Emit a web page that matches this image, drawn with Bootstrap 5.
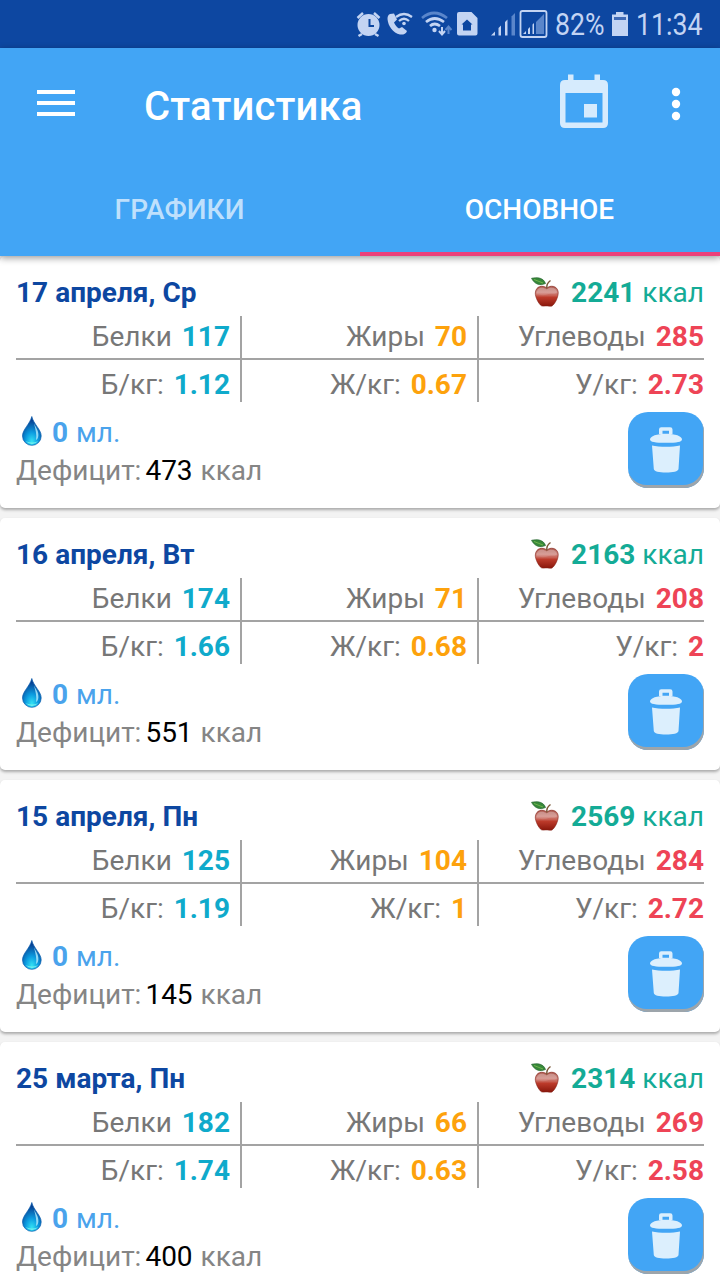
<!DOCTYPE html>
<html lang="ru">
<head>
<meta charset="utf-8">
<meta name="viewport" content="width=device-width, initial-scale=1">
<title>Статистика</title>
<link href="https://cdn.jsdelivr.net/npm/bootstrap@5.3.0/dist/css/bootstrap.min.css" rel="stylesheet">
<style>
body{font-family:Roboto,"Noto Sans",sans-serif;font-size:28px;line-height:33px;color:#777;background:#f3f3f3;height:1280px}
svg{display:block;flex:none}
.status{height:48px;background:#0d47a1;color:#c3d4f3;font-size:31px}
.cond{display:inline-block;transform-origin:0 50%;transform:scaleX(.86);white-space:nowrap;line-height:48px;padding-top:1px}
.topbar{background:#42a5f5;height:208px;position:relative;z-index:2;box-shadow:0 2px 7px rgba(0,0,0,.4)}
.bar-row{height:112px}
.title{font-size:40px;line-height:48px;font-weight:500;color:#fff;margin:5px 0 0 69px;letter-spacing:.15px}
.tabs .nav-link{height:96px;line-height:100px;padding:0 1px 0 0;border-radius:0;font-weight:500;color:#bfe0fc;border-bottom:4px solid transparent}
.tabs .nav-link.active{color:#fff;border-color:#ec407a}
.day{height:252px;border:0;border-radius:5px;padding:20px 16px 0;margin-bottom:10px;box-shadow:0 2px 3px rgba(0,0,0,.3);color:#777}
.day b{font-weight:700}
.date{color:#0d47a1;font-weight:700;letter-spacing:.02px}
.kcal{color:#14ab96}
.kcal svg{margin-right:10px}
.macros{display:grid;grid-template-columns:226px 237px 225px;margin-top:7px;background:linear-gradient(#a3a3a3,#a3a3a3) 0 42px/100% 2px no-repeat}
.macros>div{height:42px;text-align:right;padding:4px 10px 0 0;border-right:2px solid #a3a3a3;white-space:nowrap}
.macros>div:nth-child(3n){border-right:0;padding-right:0}
.macros>div:nth-child(n+4){height:44px;padding-top:10px}
.macros b{margin-left:3px}
.p{color:#0faacb}.f{color:#fda20c}.c{color:#ee4456}
.foot{padding-top:14px}
.water{color:#4aa3ec}
.water svg{margin:0 10px 0 6px}
.water b{margin-right:1px}
.deficit{margin-top:5px;color:#858585}
.n{color:#000;margin:0 1px 0 4px}
.trash{width:76px;height:76px;padding:0;border:0;border-radius:20px;background:#42a5f5;box-shadow:inset -1px -3px 0 #9da5ab;margin-top:10px}
</style>
</head>
<body class="overflow-hidden">
<svg width="0" height="0" class="position-absolute" aria-hidden="true">
<defs>
<linearGradient id="red" x1="0" y1="0" x2="0" y2="1"><stop offset="0" stop-color="#a8564c"/><stop offset=".3" stop-color="#d08a82"/><stop offset=".48" stop-color="#c65c4f"/><stop offset=".55" stop-color="#bd3b2b"/><stop offset="1" stop-color="#8a170b"/></linearGradient>
<linearGradient id="shine" x1="0" y1="0" x2="0" y2="1"><stop offset="0" stop-color="#fff" stop-opacity=".3"/><stop offset="1" stop-color="#fff" stop-opacity=".1"/></linearGradient>
<radialGradient id="blue" cx=".5" cy=".88" r=".75"><stop offset="0" stop-color="#35e4f4"/><stop offset=".45" stop-color="#0b9be0"/><stop offset="1" stop-color="#063f91"/></radialGradient>
</defs>
<symbol id="apple" viewBox="0 0 30 32">
<path d="M16 12C19 9 26.500 9.500 27.200 16C27.500 21 24 28 21 30C19 30.500 18 29.800 16 29.900C14 29.800 12.500 30.500 10.500 29.800C7.500 28 4.200 21 4.300 17C4.800 9.500 12 9 16 12Z" fill="url(#red)" stroke="#842015" stroke-width=".6"/>
<path d="M15.500 13.500C19 10.500 25 11 26 16C24 19.500 20 16.500 16 18.500C12 20 8 18.500 5.500 18.500C5.800 10.500 12 10.800 15.500 13.500Z" fill="url(#shine)"/>
<path d="M15.800 12.500C15.500 9 16.500 6.500 19.500 4.500" fill="none" stroke="#7c5a3a" stroke-width="1.500"/>
<path d="M.5 2.300C6 1 12.500 1.500 14.500 7.500C8.500 10.200 3.500 8 .5 2.300Z" fill="#37883a" stroke="#175922" stroke-width=".6"/>
<path d="M3 3.500L12 7" stroke="#76b84e" stroke-width=".9"/>
</symbol>
<symbol id="drop" viewBox="0 0 20 30">
<path d="M9.800 .5C8 8 .5 13.500 .5 20A9.300 9.300 0 0 0 19.200 20C19.200 13.500 11.500 8 9.800 .5Z" fill="url(#blue)" stroke="#0a5bae" stroke-width=".7"/>
<path d="M12 7.500C14 11.500 17 15.500 16.300 20C16 22.500 15 23.500 14 24C15 19 13.500 13 12 7.500Z" fill="#a9e6fa" opacity=".85"/>
<path d="M3.500 25Q10 31 16.500 25Q10 28 3.500 25Z" fill="#73f0ee"/>
</symbol>
<symbol id="bin" viewBox="0 0 76 76">
<path d="M31 22V17.500A2.300 2.300 0 0 1 33.300 15.200H42.200A2.300 2.300 0 0 1 44.500 17.500V22H41V18.800H34.500V22Z" fill="#dceffd"/>
<path d="M22 27.500C22 24 29 21.700 38 21.700S54 24 54 27.500C54 30 49 30.800 38 30.800S22 30 22 27.500Z" fill="#dceffd"/>
<path d="M24 33.500C31 35.200 45 35.200 52 33.500L50.500 57C50.300 59.500 45 60.500 38 60.500S26 59.500 25.800 57Z" fill="#dceffd"/>
</symbol>
</svg>

<div class="status d-flex">
<svg width="198" height="48" viewBox="0 0 198 48" style="margin-left:350px">
<g fill="#c3d4f3" stroke="none">
<circle cx="18.500" cy="25" r="11"/>
<path d="M12 34L8.500 36M25 34L28.500 36M7.500 18L13 13M29.500 18L24 13" stroke="#c3d4f3" stroke-width="2.500" fill="none"/>
<path d="M19.500 19V26H24" stroke="#0d47a1" stroke-width="2" fill="none"/>
<path d="M40 14L44 13.500L47 19.500L44 22.500C45 25 47 27.500 49 28.500L52 27L57 31C56 34 53 35 50 34.500C43 33 38 26 37.500 19C37.500 16.500 38 15 40 14Z"/>
<g fill="none" stroke="#c3d4f3" stroke-width="2.200"><path d="M46 17Q54 11 62 17M49 21Q54 16.500 59 21"/></g><circle cx="54" cy="23.500" r="1.800"/>
<g fill="none" stroke-width="2.700"><path d="M72 18Q84 8 97 18" stroke="#5a86cb"/><path d="M76 22Q84.500 15 94 22M80 26Q84.500 22 90 26" stroke="#c3d4f3"/></g><circle cx="84.500" cy="30" r="2.200"/>
<path d="M92 27V34M89 31L92 34.500L95 31" fill="none" stroke="#c3d4f3" stroke-width="2"/>
<path d="M98.500 34V27M95.500 30L98.500 26.500L101.500 30" fill="none" stroke="#5a86cb" stroke-width="2"/>
<path fill-rule="evenodd" d="M109 12H121.500L127.500 18V33.500Q127.500 35.500 125.500 35.500H109Q107 35.500 107 33.500V14Q107 12 109 12ZM117 19.500L111.500 24.500H113V30.500H121V24.500H122.500Z"/>
<path d="M141 35.500L145 31.500V35.500ZM148.500 28L151 25.500V35.500H148.500ZM155 22L157.500 19.500V35.500H155Z"/><path d="M161.500 16.500L165 13V35.500H161.500Z" fill="#5a86cb"/>
<rect x="170.500" y="11" width="26" height="26" rx="2" fill="none" stroke="#c3d4f3" stroke-width="1.800"/>
<path d="M186 22L194 14V34H186Z" fill="#5a86cb"/><path d="M173 34L176 31V34ZM178 29L180 27V34H178ZM182.500 24.500L184 23V34H182.500Z"/>
</g></svg>
<span class="cond" style="width:49px;margin-left:7px">82%</span>
<svg width="18" height="48" viewBox="0 0 18 48" style="margin-left:7px"><path d="M1 14.500H5V12H12.500V14.500H17V36H1Z" fill="#c3d4f3"/><path d="M3 17H15V20H3Z" fill="#3f6ab6"/></svg>
<span class="cond" style="width:70px;margin-left:7px">11:34</span>
</div>

<header class="topbar">
<div class="bar-row d-flex">
<svg width="38" height="112" viewBox="0 0 38 112" style="margin-left:37px"><path d="M0 44H38M0 55H38M0 66H38" stroke="#fff" stroke-width="4"/></svg>
<h1 class="title align-self-center">Статистика</h1>
<svg class="ms-auto" width="48" height="112" viewBox="0 0 48 112"><path fill="#d6ebfd" fill-rule="evenodd" d="M8 26.500H13.500V32H34.500V26.500H40V32H43Q48 32 48 37V75Q48 80 43 80H5Q0 80 0 75V37Q0 32 5 32H8ZM5.500 45V74.500H42.500V45ZM24 56H37V69.500H24Z"/></svg>
<svg width="112" height="112" viewBox="0 0 112 112"><g fill="#fff"><circle cx="68" cy="44" r="4.200"/><circle cx="68" cy="56" r="4.200"/><circle cx="68" cy="68" r="4.200"/></g></svg>
</div>
<nav class="tabs nav nav-justified flex-nowrap"><a class="nav-link w-50" href="#">ГРАФИКИ</a><a class="nav-link active w-50" href="#">ОСНОВНОЕ</a></nav>
</header>

<main>
<section class="card day">
<div class="d-flex justify-content-between"><span class="date">17 апреля, Ср</span><span class="kcal d-flex"><svg width="30" height="32"><use href="#apple"/></svg><span><b>2241</b> ккал</span></span></div>
<div class="macros"><div>Белки <b class="p">117</b></div><div>Жиры <b class="f">70</b></div><div>Углеводы <b class="c">285</b></div><div>Б/кг: <b class="p">1.12</b></div><div>Ж/кг: <b class="f">0.67</b></div><div>У/кг: <b class="c">2.73</b></div></div>
<div class="d-flex justify-content-between"><div class="foot"><div class="water d-flex"><svg width="20" height="30"><use href="#drop"/></svg><span><b>0</b> мл.</span></div><div class="deficit">Дефицит:<span class="n">473</span> ккал</div></div><button class="btn trash" aria-label="Удалить"><svg width="76" height="76"><use href="#bin"/></svg></button></div>
</section>
<section class="card day">
<div class="d-flex justify-content-between"><span class="date">16 апреля, Вт</span><span class="kcal d-flex"><svg width="30" height="32"><use href="#apple"/></svg><span><b>2163</b> ккал</span></span></div>
<div class="macros"><div>Белки <b class="p">174</b></div><div>Жиры <b class="f">71</b></div><div>Углеводы <b class="c">208</b></div><div>Б/кг: <b class="p">1.66</b></div><div>Ж/кг: <b class="f">0.68</b></div><div>У/кг: <b class="c">2</b></div></div>
<div class="d-flex justify-content-between"><div class="foot"><div class="water d-flex"><svg width="20" height="30"><use href="#drop"/></svg><span><b>0</b> мл.</span></div><div class="deficit">Дефицит:<span class="n">551</span> ккал</div></div><button class="btn trash" aria-label="Удалить"><svg width="76" height="76"><use href="#bin"/></svg></button></div>
</section>
<section class="card day">
<div class="d-flex justify-content-between"><span class="date">15 апреля, Пн</span><span class="kcal d-flex"><svg width="30" height="32"><use href="#apple"/></svg><span><b>2569</b> ккал</span></span></div>
<div class="macros"><div>Белки <b class="p">125</b></div><div>Жиры <b class="f">104</b></div><div>Углеводы <b class="c">284</b></div><div>Б/кг: <b class="p">1.19</b></div><div>Ж/кг: <b class="f">1</b></div><div>У/кг: <b class="c">2.72</b></div></div>
<div class="d-flex justify-content-between"><div class="foot"><div class="water d-flex"><svg width="20" height="30"><use href="#drop"/></svg><span><b>0</b> мл.</span></div><div class="deficit">Дефицит:<span class="n">145</span> ккал</div></div><button class="btn trash" aria-label="Удалить"><svg width="76" height="76"><use href="#bin"/></svg></button></div>
</section>
<section class="card day">
<div class="d-flex justify-content-between"><span class="date">25 марта, Пн</span><span class="kcal d-flex"><svg width="30" height="32"><use href="#apple"/></svg><span><b>2314</b> ккал</span></span></div>
<div class="macros"><div>Белки <b class="p">182</b></div><div>Жиры <b class="f">66</b></div><div>Углеводы <b class="c">269</b></div><div>Б/кг: <b class="p">1.74</b></div><div>Ж/кг: <b class="f">0.63</b></div><div>У/кг: <b class="c">2.58</b></div></div>
<div class="d-flex justify-content-between"><div class="foot"><div class="water d-flex"><svg width="20" height="30"><use href="#drop"/></svg><span><b>0</b> мл.</span></div><div class="deficit">Дефицит:<span class="n">400</span> ккал</div></div><button class="btn trash" aria-label="Удалить"><svg width="76" height="76"><use href="#bin"/></svg></button></div>
</section>
</main>
<script src="https://cdn.jsdelivr.net/npm/bootstrap@5.3.0/dist/js/bootstrap.bundle.min.js"></script>
</body>
</html>
